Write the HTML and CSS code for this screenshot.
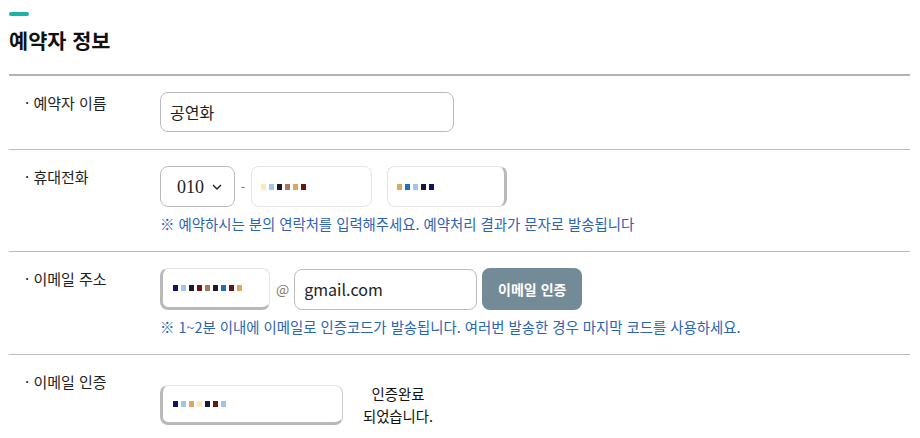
FILE: index.html
```html
<!DOCTYPE html>
<html lang="ko">
<head>
    <meta charset="UTF-8">
    <meta name="viewport" content="width=device-width, initial-scale=1.0">
    <title>예약자 정보</title>
    <link rel="stylesheet" href="styles.css">
</head>
<body>
    <div class="container">
        <div class="header">
            <span class="bar"></span>
            <h2>예약자 정보</h2>
        </div>

        <div class="form">
            <div class="row">
                <div class="label">· 예약자 이름</div>
                <div class="field">
                    <input class="input name" type="text" value="공연화">
                </div>
            </div>

            <div class="row">
                <div class="label">· 휴대전화</div>
                <div class="field">
                    <div class="line">
                        <div class="select-box">
                            <select>
                                <option>010</option>
                                <option>011</option>
                                <option>016</option>
                            </select>
                            <svg class="chevron" width="10" height="6" viewBox="0 0 10 6"><path d="M1 1l4 4 4-4" fill="none" stroke="#222" stroke-width="1.4"/></svg>
                        </div>
                        <span class="dash">-</span>
                        <div class="input masked phone">
                            <span class="mosaic">
                                <i class="c1"></i><i class="c2"></i><i class="c0"></i><i class="c3"></i><i class="c4"></i><i class="c5"></i>
                            </span>
                        </div>
                        <div class="input masked phone last">
                            <span class="mosaic">
                                <i class="c4"></i><i class="c6"></i><i class="c2"></i><i class="c0"></i><i class="c7"></i>
                            </span>
                        </div>
                    </div>
                    <p class="help">※ 예약하시는 분의 연락처를 입력해주세요. 예약처리 결과가 문자로 발송됩니다</p>
                </div>
            </div>

            <div class="row">
                <div class="label">· 이메일 주소</div>
                <div class="field">
                    <div class="line">
                        <div class="input masked local">
                            <span class="mosaic">
                                <i class="c7"></i><i class="c2"></i><i class="c0"></i><i class="c5"></i><i class="c3"></i><i class="c0"></i><i class="c6"></i><i class="c5"></i><i class="c4"></i>
                            </span>
                        </div>
                        <span class="at">@</span>
                        <input class="input domain" type="text" value="gmail.com">
                        <button class="btn">이메일 인증</button>
                    </div>
                    <p class="help">※ 1~2분 이내에 이메일로 인증코드가 발송됩니다. 여러번 발송한 경우 마지막 코드를 사용하세요.</p>
                </div>
            </div>

            <div class="row">
                <div class="label">· 이메일 인증</div>
                <div class="field verify">
                    <div class="line">
                        <div class="input masked code">
                            <span class="mosaic">
                                <i class="c7"></i><i class="c2"></i><i class="c4"></i><i class="c1"></i><i class="c0"></i><i class="c5"></i><i class="c2"></i>
                            </span>
                        </div>
                        <div class="done">인증완료<br>되었습니다.</div>
                    </div>
                </div>
            </div>
        </div>
    </div>
</body>
</html>
```

FILE: styles.css
```css
body {
    margin: 0;
    font-family: 'Noto Sans CJK KR', 'Noto Sans', sans-serif;
    color: #222;
    background: #fff;
}
.container {
    margin: 0 10px 0 9px;
}
.header {
    padding-top: 12px;
    padding-bottom: 20px;
}
.bar {
    display: block;
    width: 20px;
    height: 4px;
    border-radius: 2px;
    background: #1bb3a9;
}
.header h2 {
    margin: 10px 0 0;
    font-size: 20.8px;
    line-height: 28px;
    font-weight: 700;
    color: #111;
}
.form {
    border-top: 2px solid #b3b3b3;
}
.row {
    display: flex;
    border-bottom: 1px solid #bcbcbc;
}
.label {
    width: 135px;
    padding: 17px 0 0 16px;
    font-size: 15px;
    line-height: 20px;
    color: #222;
}
.field {
    flex: 1;
    padding: 16px 0 17px;
}
.field.verify {
    padding-top: 28px;
}
.line {
    display: flex;
    align-items: center;
}
.input {
    box-sizing: border-box;
    height: 40px;
    border: 1px solid #bbb;
    border-radius: 8px;
    background: #fff;
    font-family: inherit;
    color: #222;
    outline: none;
}
.input.name {
    width: 294px;
    padding: 0 9px;
    font-size: 16px;
}
.select-box {
    position: relative;
    width: 75px;
    height: 41px;
}
.select-box select {
    width: 100%;
    height: 100%;
    box-sizing: border-box;
    border: 1px solid #bbb;
    border-radius: 8px;
    background: #fff;
    padding: 0 0 0 16px;
    font-family: 'Liberation Serif', serif;
    font-size: 18px;
    color: #222;
    appearance: none;
    -webkit-appearance: none;
}
.chevron {
    position: absolute;
    right: 13px;
    top: 18px;
}
.dash {
    width: 16px;
    text-align: center;
    color: #777;
    font-size: 13px;
}
.masked {
    display: flex;
    align-items: center;
    border-color: #e4e4e4;
}
.phone {
    width: 121px;
    height: 41px;
    padding-left: 9px;
}
.phone.last {
    margin-left: 15px;
    width: 120px;
    border-right: 3px solid #b9b9b9;
}
.local {
    width: 110px;
    height: 42px;
    padding-left: 10px;
    border-left: 3px solid #b9b9b9;
    border-bottom: 3px solid #b9b9b9;
}
.code {
    width: 183px;
    padding-left: 10px;
    border-left: 3px solid #b9b9b9;
    border-bottom: 3px solid #b9b9b9;
    border-right-color: #ccc;
}
.mosaic {
    display: flex;
    align-items: center;
    height: 10px;
}
.mosaic i {
    display: block;
    width: 5px;
    height: 6px;
    margin-right: 3px;
}
.mosaic .c0 { background: #1a1a2a; }
.mosaic .c1 { background: #fde9b6; }
.mosaic .c2 { background: #9ec6e8; }
.mosaic .c3 { background: #a87a5c; }
.mosaic .c4 { background: #e0a55e; }
.mosaic .c5 { background: #6b1414; }
.mosaic .c6 { background: #1f6fbf; }
.mosaic .c7 { background: #0a1470; }
.at {
    margin: 0 5px 0 6px;
    font-size: 14px;
    color: #8a7a6a;
}
.input.domain {
    width: 183px;
    height: 41px;
    padding: 0 9px;
    font-size: 16px;
}
.btn {
    margin-left: 5px;
    width: 100px;
    height: 42px;
    border: none;
    border-radius: 8px;
    background: #738b97;
    color: #fff;
    font-family: inherit;
    font-size: 14px;
    font-weight: 700;
    cursor: pointer;
}
.help {
    margin: 7px 0 0;
    font-size: 14.4px;
    line-height: 20px;
    color: #2d63b5;
}
.done {
    width: 90px;
    margin-left: 10px;
    text-align: center;
    font-size: 14.4px;
    line-height: 22px;
    color: #111;
}
```
